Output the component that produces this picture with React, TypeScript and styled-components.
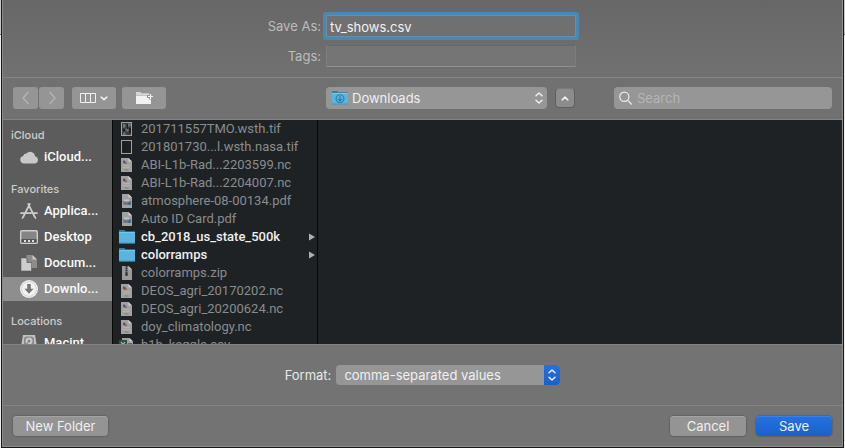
import React from "react";
import styled, { createGlobalStyle, css } from "styled-components";

const GlobalStyle = createGlobalStyle`
  *, *::before, *::after { box-sizing: border-box; }
  body {
    margin: 0;
    overflow: hidden;
    background: linear-gradient(#c9c9c9 34px, #6a6a6a 34px, #6a6a6a 35px, #ececec 35px);
  }
  body, button, input, select {
    font-family: Inter, "Liberation Sans", sans-serif;
    font-size: 13px;
    line-height: 16px;
  }
`;

const Dialog = styled.form`
  margin: 0 1px;
  border: solid #161819;
  border-width: 0 1px 1px;
  color: #e4e4e4;
  background: #737373;
`;

const Panel = styled.div`
  border: solid #8b8b8b;
  border-width: 0 1px 1px;
`;

const NameArea = styled.section`
  display: flex;
  flex-direction: column;
  gap: 8px;
  padding: 15px 0 10px;
  border-bottom: 1px solid #838383;
  background: linear-gradient(#676767, #717171);
`;

const FieldRow = styled.div`
  display: flex;
  justify-content: center;
  align-items: center;
  gap: 5px;
`;

const FieldLabel = styled.label`
  width: 52px;
  display: flex;
  justify-content: flex-end;
  white-space: nowrap;
  color: #bcbcbc;
`;

const TextField = styled.input<{ $focused?: boolean }>`
  width: 250px;
  height: 22px;
  padding: 2px 3px 0;
  border: 1px solid #7d7d7d;
  border-top-color: #686868;
  border-bottom-color: #8f8f8f;
  border-radius: 0;
  outline: none;
  color: #f2f2f2;
  background: #757575;
  ${(p) =>
    p.$focused &&
    css`
      border-color: #6f8ca0;
      background: #707070;
      box-shadow: 0 0 0 3px #4689b7;
      border-radius: 1px;
    `}
`;

const Toolbar = styled.section`
  display: flex;
  align-items: center;
  padding: 9px 10px 10px;
  border-bottom: 1px solid #828282;
  background: #717171;
`;

const ToolGroup = styled.div`
  display: flex;
  flex: 1;
  gap: 6px;
`;

const NavPair = styled.div`
  display: flex;
  gap: 1px;
  margin-right: 2px;
`;

const ToolButton = styled.button<{ $width: number }>`
  display: flex;
  align-items: center;
  justify-content: center;
  gap: 4px;
  width: ${(p) => p.$width}px;
  height: 22px;
  padding: 0;
  border: 0;
  border-radius: 3px;
  color: #f0f0f0;
  background: #959595;
  &:disabled { color: #b2b2b2; }
`;

const LocationGroup = styled.div`
  display: flex;
  align-items: center;
  gap: 8px;
`;

const Popup = styled.div<{ $width: number; $height: number }>`
  display: grid;
  grid-template-columns: auto 1fr auto;
  align-items: center;
  width: ${(p) => p.$width}px;
  height: ${(p) => p.$height}px;
  border-radius: 4px;
  background: #969696;
  & > * { grid-row: 1; }
`;

const PopupSelect = styled.select<{ $indent: number }>`
  grid-column: 1 / -1;
  appearance: none;
  width: 100%;
  height: 100%;
  padding: 0 24px 0 ${(p) => p.$indent}px;
  border: 0;
  outline: none;
  color: #f0f0f0;
  background: transparent;
`;

const PopupIcon = styled.span`
  grid-column: 1;
  display: flex;
  padding-left: 6px;
  pointer-events: none;
`;

const PopupArrows = styled.span<{ $accent?: boolean }>`
  grid-column: 3;
  display: flex;
  align-items: center;
  justify-content: center;
  width: 16px;
  height: 100%;
  border-radius: 0 4px 4px 0;
  color: #f0f0f0;
  pointer-events: none;
  background: ${(p) => (p.$accent ? "linear-gradient(#2472e2, #1a5fc9)" : "none")};
`;

const CollapseButton = styled.button`
  display: flex;
  align-items: center;
  justify-content: center;
  width: 20px;
  height: 20px;
  padding: 0;
  border: 1px solid #5f5f5f;
  border-top-color: #7a7a7a;
  border-radius: 4px;
  color: #f0f0f0;
  background: #8c8c8c;
`;

const SearchBox = styled.label`
  display: flex;
  align-items: center;
  gap: 5px;
  width: 218px;
  height: 22px;
  margin-left: 39px;
  padding: 0 5px;
  border-radius: 4px;
  background: #969696;
`;

const SearchInput = styled.input`
  flex: 1;
  min-width: 0;
  padding: 0;
  border: 0;
  outline: none;
  appearance: none;
  color: #f0f0f0;
  background: transparent;
  &::placeholder { color: #b5b5b5; opacity: 1; }
`;

const Browser = styled.section`
  display: flex;
  height: 224px;
  overflow: hidden;
  background: #1e2225;
`;

const Sidebar = styled.nav`
  width: 109px;
  flex: none;
  overflow: hidden;
  background: #5c5c5c;
`;

const SidebarTitle = styled.h2`
  margin: 0;
  padding: 7px 8px 2px;
  font-size: 11px;
  line-height: 16px;
  font-weight: 500;
  color: #cdcdcd;
`;

const SidebarList = styled.ul`
  display: flex;
  flex-direction: column;
  gap: 2px;
  margin: 0 0 5px;
  padding: 0;
  list-style: none;
`;

const SidebarLink = styled.a<{ $active?: boolean }>`
  display: flex;
  align-items: center;
  gap: 6px;
  height: 24px;
  padding-left: 17px;
  font-family: Roboto, Inter, sans-serif;
  font-weight: 500;
  white-space: nowrap;
  text-decoration: none;
  color: #fafafa;
  background: ${(p) => (p.$active ? "#8e8e8e" : "transparent")};
`;

const FileColumn = styled.ul`
  flex: none;
  width: 206px;
  margin: 0;
  padding: 0;
  border: solid #060707;
  border-width: 0 1px;
  overflow: hidden;
  list-style: none;
`;

const FileRow = styled.li<{ $folder?: boolean }>`
  display: flex;
  align-items: center;
  gap: 6px;
  height: 18px;
  padding: 0 2px 0 6px;
  white-space: nowrap;
  font-family: Roboto, Inter, sans-serif;
  font-weight: ${(p) => (p.$folder ? 500 : 400)};
  color: ${(p) => (p.$folder ? "#f0f0f0" : "#8a8c8d")};
`;

const FileName = styled.span`
  flex: 1;
`;

const FormatArea = styled.section`
  display: flex;
  justify-content: center;
  align-items: center;
  gap: 5px;
  height: 62px;
  border: solid #828282;
  border-width: 1px 0;
`;

const FormatLabel = styled.label`
  color: #e8e8e8;
`;

const Footer = styled.footer`
  display: flex;
  align-items: center;
  gap: 10px;
  height: 40px;
  padding: 0 10px;
`;

const PushButton = styled.button<{ $width: number; $primary?: boolean; $leading?: boolean }>`
  width: ${(p) => p.$width}px;
  height: 20px;
  margin-right: ${(p) => (p.$leading ? "auto" : "0")};
  padding: 0;
  border: 0;
  border-radius: 4px;
  color: #f0f0f0;
  background: ${(p) => (p.$primary ? "linear-gradient(#2472e2, #1b60c9)" : "#949494")};
  box-shadow: 0 0 1px 1px #636363, inset 0 1px 0 ${(p) => (p.$primary ? "#3b80e6" : "#a3a3a3")};
`;

type FileKind = "photo" | "frame" | "nc" | "pdf" | "folder" | "zip" | "csv";

const UpDown = () => (
  <svg width="10" height="14" viewBox="0 0 10 14" fill="none" stroke="currentColor" strokeWidth="1.5" strokeLinecap="round" strokeLinejoin="round">
    <path d="M2 4.8 5 2l3 2.8M2 9.2 5 12l3-2.8" />
  </svg>
);

const Chevron = ({ d, w = 10, h = 14 }: { d: string; w?: number; h?: number }) => (
  <svg width={w} height={h} viewBox={`0 0 ${w} ${h}`} fill="none" stroke="currentColor" strokeWidth="1.6" strokeLinecap="round" strokeLinejoin="round">
    <path d={d} />
  </svg>
);

const FolderIcon = ({ download }: { download?: boolean }) => (
  <svg width="16" height="14" viewBox="0 0 16 14">
    <path d="M0 0h5.5l1 1.3H16V13H0Z" fill="#367f9e" />
    <path d="M0 2h16v11.3H0Z" fill="#5bb3df" />
    <path d="M0 2h16v1H0Z" fill="#78c6ea" />
    <path d="M0 12.6h16v.9H0Z" fill="#3f94be" />
    {download && (
      <g fill="none" stroke="#247fb0" strokeWidth="1.1">
        <circle cx="8" cy="7.6" r="3.9" />
        <path d="M8 5v4.6M6 7.9l2 2 2-2" />
      </g>
    )}
  </svg>
);

const FileIcon = ({ kind }: { kind: FileKind }) => {
  if (kind === "folder") return <FolderIcon />;
  return (
    <svg width="16" height="16" viewBox="0 0 16 16">
      {(kind === "photo" || kind === "frame") && (
        <rect x="2.5" y="1.5" width="10" height="13" fill={kind === "photo" ? "#3a3c3d" : "#1d1f20"} stroke="#a0a0a0" />
      )}
      {kind === "photo" && (
        <>
          <path d="M4 3h2l1 2-2 2H4ZM9 2.5h3v2L9 6ZM6 8l3-1 1 3-2 1ZM4 12l2-1 1 3H4Z" fill="#6d7071" />
          <path d="M8 3h1v5H8ZM10 7h2v5h-2ZM4 8h2v2H4Z" fill="#1b1d1e" />
        </>
      )}
      {kind === "nc" && (
        <>
          <path d="M2 1h7.5L13 4.5V15H2Z" fill="#a2a2a2" />
          <path d="M9.5 1 13 4.5H9.5Z" fill="#cdcdcd" />
          <circle cx="5.2" cy="4.9" r="1.4" fill="#3c618c" />
          <path d="M5 5.5h3v1.2H5Z" fill="#a5473a" />
          <path d="M4 8.5h7M4 10.5h7" stroke="#b0b0b0" />
          <path d="M5.5 13h4" stroke="#7d7d7d" />
        </>
      )}
      {kind === "pdf" && (
        <>
          <path d="M3 1h6.5L13 4.5V15H3Z" fill="#a2a2a2" />
          <path d="M9.5 1 13 4.5H9.5Z" fill="#cdcdcd" />
          <path d="M3.5 8h9l-1 4h-7Z" fill="#797d82" />
          <path d="M5 6.5h5v2H5Z" fill="#bcc2c7" />
          <path d="M5 10.5h6" stroke="#527297" />
          <circle cx="10.5" cy="10.5" r="1.5" fill="#3e658e" />
        </>
      )}
      {kind === "zip" && (
        <>
          <path d="M3 1h6.5L13 4.5V15H3Z" fill="#9a9a9a" />
          <path d="M9.5 1 13 4.5H9.5Z" fill="#bdbdbd" />
          <path d="M7.5 1v9" stroke="#303334" strokeWidth="2" strokeDasharray="1.4 .5" />
          <path d="M6.5 8h2v3h-2Z" fill="#343738" />
        </>
      )}
      {kind === "csv" && (
        <>
          <path d="M3 1h7.5L14 4.5V15H3Z" fill="#a0a0a0" />
          <path d="M10.5 1 14 4.5h-3.5Z" fill="#c9c9c9" />
          <path d="M0 3h8v9H0Z" fill="#28553d" />
          <path d="m2 5 4 5M6 5l-4 5" stroke="#b3b3b3" strokeWidth="1.2" />
          <path d="M9 6.5h4M9 9h4" stroke="#56715f" />
        </>
      )}
    </svg>
  );
};

const FILES: { name: string; kind: FileKind }[] = [
  { name: "201711557TMO.wsth.tif", kind: "photo" },
  { name: "201801730...l.wsth.nasa.tif", kind: "frame" },
  { name: "ABI-L1b-Rad...2203599.nc", kind: "nc" },
  { name: "ABI-L1b-Rad...2204007.nc", kind: "nc" },
  { name: "atmosphere-08-00134.pdf", kind: "pdf" },
  { name: "Auto ID Card.pdf", kind: "pdf" },
  { name: "cb_2018_us_state_500k", kind: "folder" },
  { name: "colorramps", kind: "folder" },
  { name: "colorramps.zip", kind: "zip" },
  { name: "DEOS_agri_20170202.nc", kind: "nc" },
  { name: "DEOS_agri_20200624.nc", kind: "nc" },
  { name: "doy_climatology.nc", kind: "nc" },
  { name: "h1b_kaggle.csv", kind: "csv" },
];

const sideIcons: Record<string, React.ReactNode> = {
  cloud: <path d="M4 15.5a3.8 3.8 0 0 1-.8-7.5 3 3 0 0 1 3.2-2.5A4.9 4.9 0 0 1 15 8.2a3.7 3.7 0 0 1-.4 7.3Z" fill="#c9c9c9" />,
  apps: (
    <g fill="none" stroke="#cdcdcd" strokeWidth="1.7" strokeLinecap="round">
      <path d="M8.2 2 14.8 15M9.8 2 3.2 15M1 11.2h10M13.8 11.2H17" />
      <path d="m3 14.8-.8 1.7M15 15l.8 1.5" strokeWidth="1.2" />
    </g>
  ),
  desktop: (
    <>
      <rect x=".7" y="2.7" width="16.6" height="12.6" rx="1" fill="#858585" stroke="#cdcdcd" strokeWidth="1.4" />
      <path d="M1.4 11h15.2v3.6H1.4Z" fill="#555" />
      <path d="M4 12h2v2H4ZM8 12h2v2H8ZM12 12h2v2h-2Z" fill="#dedede" />
    </>
  ),
  documents: (
    <>
      <path d="M6.5 1h6L17 5.5V14H6.5Z" fill="#8d8d8d" />
      <path d="M12.5 1 17 5.5h-4.5Z" fill="#c9c9c9" />
      <path d="M1 4h6l4.5 4.5V17H1Z" fill="#cdcdcd" stroke="#5c5c5c" strokeWidth=".6" />
      <path d="M7 4v4.5h4.5" fill="#8d8d8d" stroke="#5c5c5c" strokeWidth=".8" />
    </>
  ),
  downloads: (
    <>
      <circle cx="9" cy="9" r="9" fill="#f2f2f2" />
      <circle cx="9" cy="9" r="7.4" fill="none" stroke="#c4c4c4" strokeWidth=".7" />
      <path d="M7.2 4h3.6v4.7h2.8L9 13.8 4.4 8.7h2.8Z" fill="#777" />
    </>
  ),
  disk: (
    <>
      <path d="M3 1h12l2 12v4H1v-4Z" fill="#c2c2c2" />
      <rect x="4" y="2.5" width="10" height="9" rx="3" fill="#858585" />
      <circle cx="9" cy="7" r="3.6" fill="#c6c6c6" />
      <circle cx="9" cy="7" r="1.2" fill="#777" />
      <path d="m9 7-3 4" stroke="#777" />
      <path d="M2 13.5h14" stroke="#777" />
    </>
  ),
};

const SECTIONS = [
  { title: "iCloud", items: [{ icon: "cloud", name: "iCloud..." }] },
  {
    title: "Favorites",
    items: [
      { icon: "apps", name: "Applica..." },
      { icon: "desktop", name: "Desktop" },
      { icon: "documents", name: "Docum..." },
      { icon: "downloads", name: "Downlo...", active: true },
    ],
  },
  { title: "Locations", items: [{ icon: "disk", name: "Macint..." }] },
];

export default function App() {
  return (
    <>
      <GlobalStyle />
      <Dialog onSubmit={(e) => e.preventDefault()}>
        <Panel>
          <NameArea>
            <FieldRow>
              <FieldLabel htmlFor="name">Save As:</FieldLabel>
              <TextField id="name" $focused defaultValue="tv_shows.csv" spellCheck={false} />
            </FieldRow>
            <FieldRow>
              <FieldLabel htmlFor="tags">Tags:</FieldLabel>
              <TextField id="tags" />
            </FieldRow>
          </NameArea>
          <Toolbar>
            <ToolGroup>
              <NavPair>
                <ToolButton type="button" $width={25} disabled aria-label="Back">
                  <Chevron d="M7 1.5 2 7l5 5.5" />
                </ToolButton>
                <ToolButton type="button" $width={25} disabled aria-label="Forward">
                  <Chevron d="m3 1.5 5 5.5-5 5.5" />
                </ToolButton>
              </NavPair>
              <ToolButton type="button" $width={44} aria-label="View as columns">
                <svg width="16" height="10" viewBox="0 0 16 10" fill="none" stroke="currentColor">
                  <path d="M.5.5h15v9H.5ZM5.5.5v9M10.5.5v9" />
                </svg>
                <Chevron d="M1.2 1.2 4 3.6l2.8-2.4" w={8} h={5} />
              </ToolButton>
              <ToolButton type="button" $width={44} aria-label="Create folder">
                <svg width="18" height="14" viewBox="0 0 18 14">
                  <path d="M1 1h4.5l1 1.2H14V4H1Z" fill="#d6d6d6" />
                  <path d="M1 4.5h15V13H1Z" fill="#f2f2f2" />
                  <path d="M15.5 2v6.5M12 5.5h6" stroke="#959595" strokeWidth="3" />
                  <path d="M15.5 3v5M13 5.5h5" stroke="#f2f2f2" strokeWidth="1.2" />
                </svg>
              </ToolButton>
            </ToolGroup>
            <LocationGroup>
              <Popup $width={221} $height={22}>
                <PopupSelect $indent={26} aria-label="Location" defaultValue="Downloads">
                  <option>Downloads</option>
                </PopupSelect>
                <PopupIcon><FolderIcon download /></PopupIcon>
                <PopupArrows><UpDown /></PopupArrows>
              </Popup>
              <CollapseButton type="button" aria-label="Collapse">
                <Chevron d="M1.2 3.8 4 1.2l2.8 2.6" w={8} h={5} />
              </CollapseButton>
            </LocationGroup>
            <SearchBox>
              <svg width="13" height="14" viewBox="0 0 13 14" fill="none" stroke="#ececec" strokeWidth="1.2" strokeLinecap="round">
                <circle cx="5.3" cy="5.8" r="4.6" />
                <path d="m8.7 9.4 3.6 3.6" />
              </svg>
              <SearchInput type="search" placeholder="Search" aria-label="Search" />
            </SearchBox>
          </Toolbar>
          <Browser>
            <Sidebar>
              {SECTIONS.map((s) => (
                <React.Fragment key={s.title}>
                  <SidebarTitle>{s.title}</SidebarTitle>
                  <SidebarList>
                    {s.items.map((item) => (
                      <li key={item.name}>
                        <SidebarLink href="#" $active={"active" in item}>
                          <svg width="18" height="18" viewBox="0 0 18 18">{sideIcons[item.icon]}</svg>
                          {item.name}
                        </SidebarLink>
                      </li>
                    ))}
                  </SidebarList>
                </React.Fragment>
              ))}
            </Sidebar>
            <FileColumn>
              {FILES.map((f) => (
                <FileRow key={f.name} $folder={f.kind === "folder"}>
                  <FileIcon kind={f.kind} />
                  <FileName>{f.name}</FileName>
                  {f.kind === "folder" && (
                    <svg width="6" height="8" viewBox="0 0 6 8"><path d="M0 .5 6 4 0 7.5Z" fill="#b0b0b0" /></svg>
                  )}
                </FileRow>
              ))}
            </FileColumn>
          </Browser>
          <FormatArea>
            <FormatLabel htmlFor="format">Format:</FormatLabel>
            <Popup $width={224} $height={20}>
              <PopupSelect id="format" $indent={8} defaultValue="comma-separated values">
                <option>comma-separated values</option>
              </PopupSelect>
              <PopupArrows $accent><UpDown /></PopupArrows>
            </Popup>
          </FormatArea>
          <Footer>
            <PushButton type="button" $width={95} $leading>New Folder</PushButton>
            <PushButton type="button" $width={76}>Cancel</PushButton>
            <PushButton type="submit" $width={76} $primary>Save</PushButton>
          </Footer>
        </Panel>
      </Dialog>
    </>
  );
}
